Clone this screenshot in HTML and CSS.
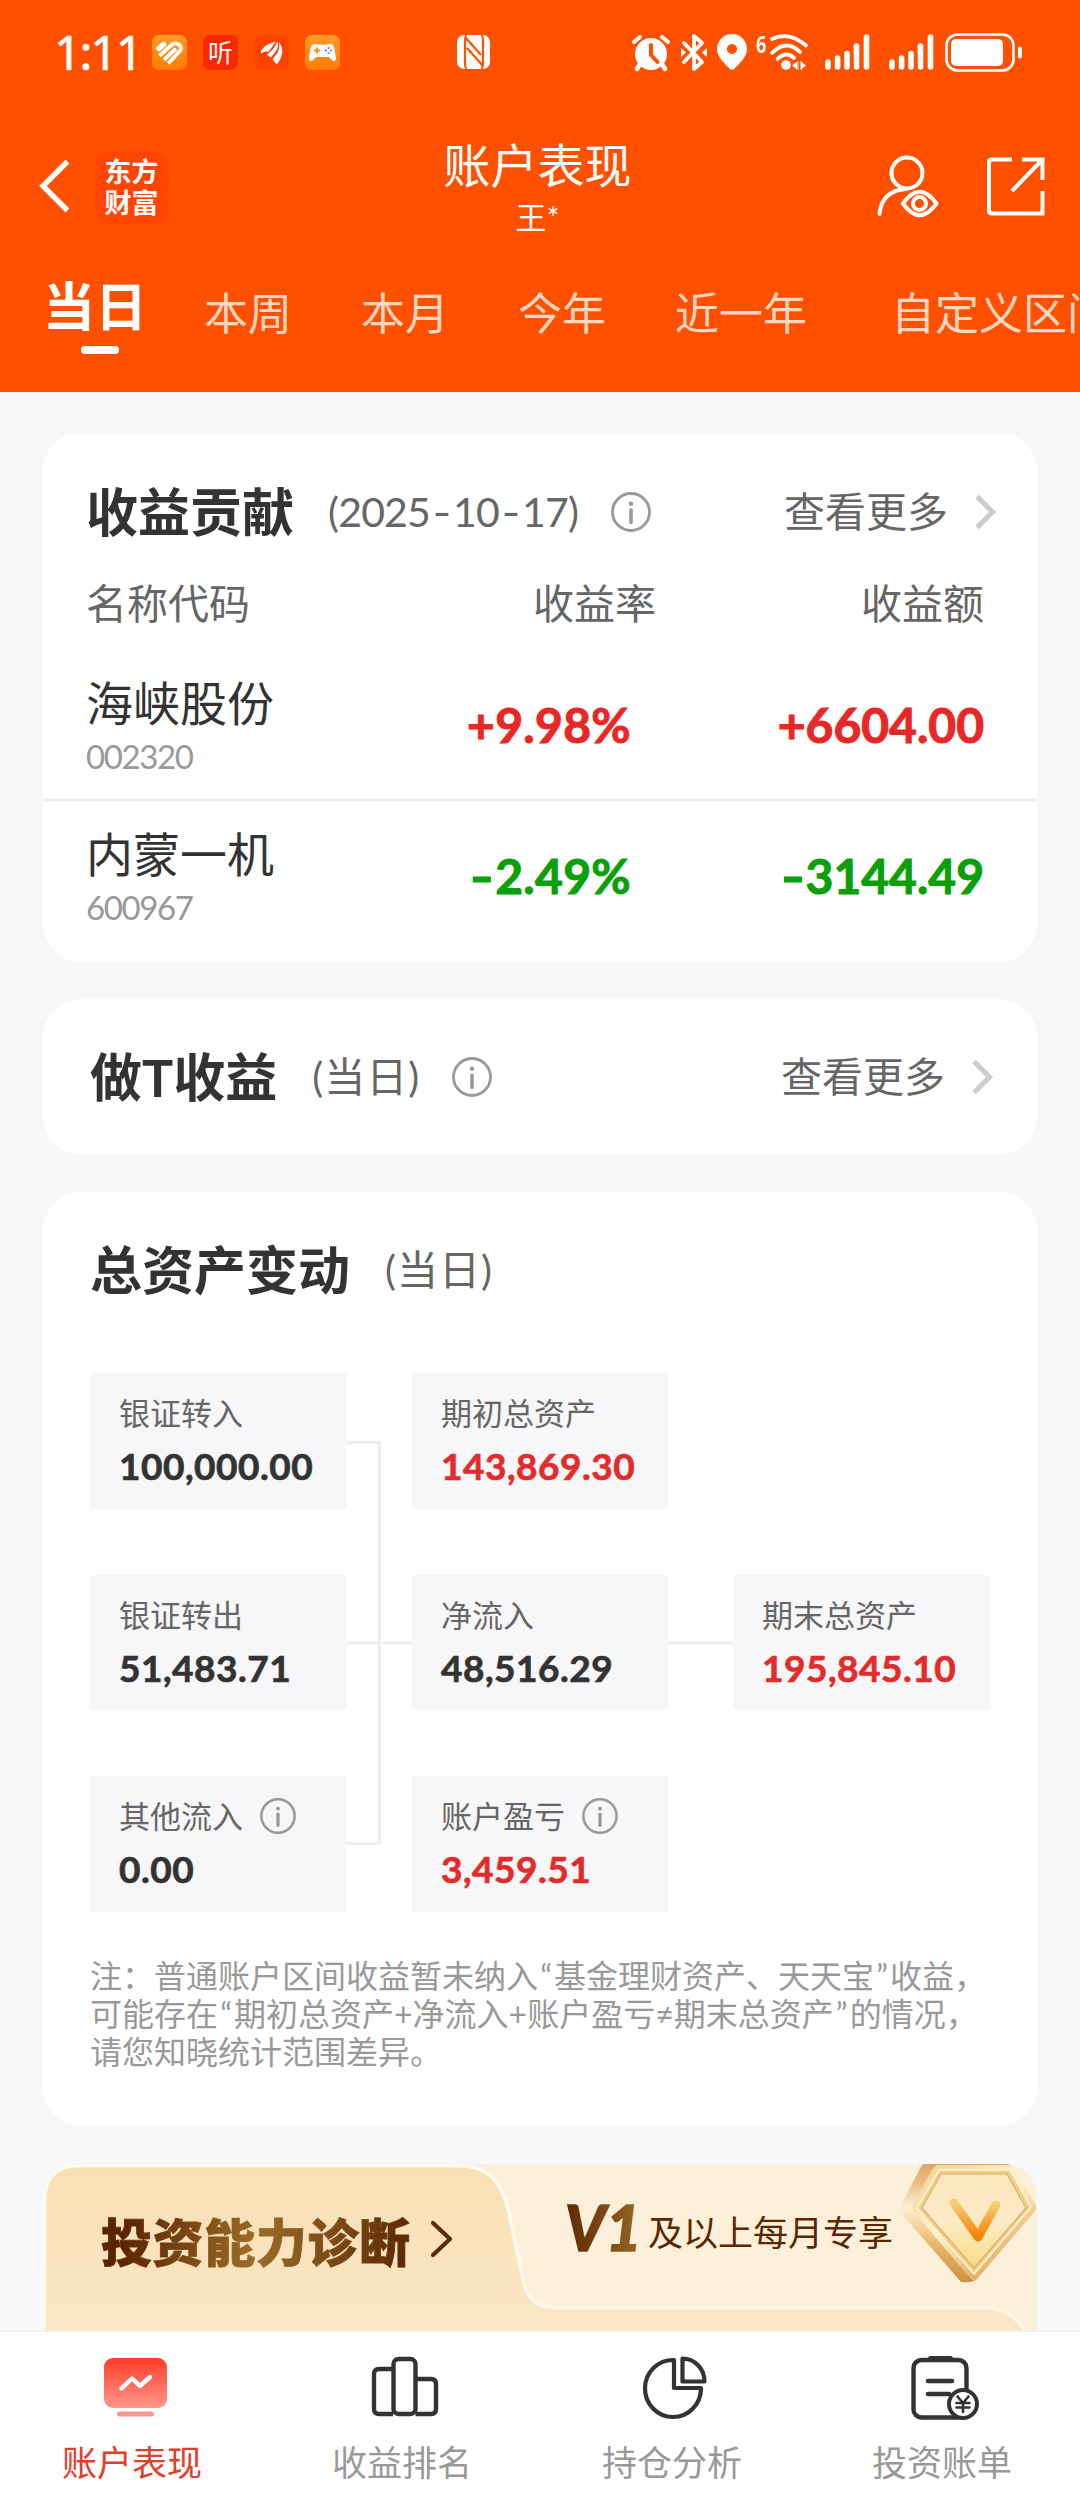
FILE: index.html
```html
<!DOCTYPE html>
<html lang="zh-CN">
<head>
<meta charset="utf-8">
<title>账户表现</title>
<link rel="stylesheet" href="styles.css">
</head>
<body>
<svg class="defs" width="0" height="0" aria-hidden="true">
  <symbol id="info" viewBox="0 0 40 40"><circle cx="20" cy="20" r="18.500" fill="none" stroke="#999" stroke-width="2.800"/><circle cx="20" cy="11.800" r="2.200" fill="#999"/><path d="M20 18v12.500" stroke="#999" stroke-width="3.600" stroke-linecap="round"/></symbol>
  <symbol id="more" viewBox="0 0 23 36"><path d="M3 2.500L18.500 18L3 33.500" fill="none" stroke="#ccc" stroke-width="5"/></symbol>
  <symbol id="bars" viewBox="0 0 46 36"><path d="M3 28v5M12.600 24v9M22 19.500v13.500M31.500 12v21M41.500 3v30" stroke="#fff" stroke-width="5.600" stroke-linecap="round"/></symbol>
</svg>
<header class="top">
  <div class="status">
    <span class="time">1:11</span>
    <div class="apps">
      <svg width="35" height="35" viewBox="0 0 35 35"><defs><linearGradient id="og" x2="0" y2="1"><stop stop-color="#ff9b28"/><stop offset="1" stop-color="#ff7d00"/></linearGradient></defs><rect width="35" height="35" rx="7" fill="url(#og)"/><path d="M7 13.500L11.500 9.500" stroke="#fff" stroke-width="5.500" stroke-linecap="round"/><path d="M9 19.500L19.500 10C24.500 5.500 32 11.500 27.500 16.500L17.500 27M13.500 23.500L22.500 15" fill="none" stroke="#fff" stroke-width="3.900" stroke-linecap="square"/></svg>
      <span class="listen">听</span>
      <svg width="35" height="35" viewBox="0 0 35 35"><rect width="35" height="35" rx="7" fill="#ff4200"/><path d="M7 16C11 9 16 9 22 6.500C19 10 18 13 14 17C11 16 9 17 7 19ZM13 20C17 16 21 13 23.500 6.500C25.500 14 21 17 17 22.500ZM18.500 24C23 19 26.500 15 25 7C31 14 28 24 22.500 29.500Z" fill="#fff"/></svg>
      <svg width="35" height="35" viewBox="0 0 35 35"><rect width="35" height="35" rx="7" fill="url(#og)"/><path d="M9 9Q17.500 10.500 26 9Q29 9 30 17Q32 26 29.500 26Q28 27 24 22H11Q7 27 5.500 26Q3 26 5 17Q6 9 9 9Z" fill="#fff"/><path d="M12 12.500v6M9 15.500h6" stroke="#ff8b12" stroke-width="2"/><circle cx="23.500" cy="13" r="1.100" fill="#d44"/><circle cx="26" cy="15.500" r="1.100" fill="#68b"/><circle cx="21" cy="15.500" r="1.100" fill="#27c"/><circle cx="23.500" cy="18" r="1.100" fill="#2aa"/></svg>
    </div>
    <svg class="nfc" width="33" height="34" viewBox="0 0 33 34"><rect width="33" height="34" rx="7" fill="#fff"/><path d="M10 0Q8 0 8 7V27Q8 34 10 34M24 0Q26 0 26 7V27Q26 34 24 34M8 2L24 20M10 13L26 31" fill="none" stroke="#ff5000" stroke-width="2.200"/></svg>
    <div class="signals">
      <svg width="38" height="37" viewBox="0 0 38 37"><path d="M2 8l6-5M36 8l-6-5" stroke="#fff" stroke-width="4" stroke-linecap="round"/><circle cx="19" cy="20" r="16" fill="#fff"/><path d="M8 30l-3 5M30 30l3 5" stroke="#fff" stroke-width="4.500" stroke-linecap="round"/><path d="M19 11v10l6.500 7" fill="none" stroke="#ff5000" stroke-width="4" stroke-linecap="round"/></svg>
      <svg class="bt" width="26" height="37" viewBox="0 0 26 37"><path d="M3 9l18 19l-8 7V2l8 7L3 28" fill="none" stroke="#fff" stroke-width="3.800" stroke-linejoin="round" stroke-linecap="round"/><path d="M0 14l5 4.500l-5 4.500zM26 14l-5 4.500l5 4.500z" fill="#fff"/></svg>
      <svg class="pin" width="30" height="36" viewBox="0 0 30 36"><path fill-rule="evenodd" d="M15 0A15 15 0 0 1 30 15C30 23 22 30 17 35Q15 37 13 35C8 30 0 23 0 15A15 15 0 0 1 15 0ZM15 10a5 5 0 1 0 .01 0z" fill="#fff"/></svg>
      <span class="six">6</span>
      <svg class="wifi" width="40" height="36" viewBox="0 0 40 36"><g fill="none" stroke="#fff" stroke-width="3.800" stroke-linecap="round"><path d="M3 5Q20 -3 37 11.500M3 19Q17.500 4.500 31 18M8.500 25Q17 16.500 25 24"/></g><circle cx="17" cy="31" r="4.800" fill="#fff"/><path d="M23 31.500l5-4v8zM37 31.500l-5-4v8z" fill="#fff"/><path d="M29 27v9M32 27v9" stroke="#fff" stroke-width="1"/></svg>
      <svg class="cell" width="46" height="36"><use href="#bars"/></svg>
      <svg class="cell two" width="46" height="36"><use href="#bars"/></svg>
      <svg class="batt" width="78" height="39" viewBox="0 0 78 39"><rect x="1.500" y="1.500" width="67" height="36" rx="11" fill="none" stroke="#fff" stroke-width="2.600"/><rect x="6" y="6" width="52" height="27" rx="5" fill="#fff"/><rect x="73" y="13.500" width="4" height="12" rx="2" fill="#fff"/></svg>
    </div>
  </div>
  <div class="nav">
    <div class="nav-side">
      <svg width="32" height="56" viewBox="0 0 32 56"><path d="M28.500 2.500L4 27L28.500 51.500" fill="none" stroke="#fff" stroke-width="5.400"/></svg>
      <div class="logo">东方<br>财富</div>
    </div>
    <div class="title"><h1>账户表现</h1><p>王*</p></div>
    <div class="nav-side end">
      <svg width="64" height="64" viewBox="0 0 64 64"><g fill="none" stroke="#fff" stroke-width="4"><circle cx="31" cy="18" r="15.500"/><path d="M30 34Q6 35.500 3.500 59" stroke-linecap="round"/><path d="M27 48.500Q43.500 25 60.500 48.500Q43.500 72 27 48.500Z" stroke-linejoin="round" stroke-width="4"/><circle cx="43.500" cy="48.500" r="6.500"/></g></svg>
      <svg class="share" width="58" height="60" viewBox="0 0 58 60"><path d="M25 2.500H5Q2 2.500 2 5.500V53.500Q2 56.500 5 56.500H55.500V34M35 2.500H55.500V23M55 3L25 34" fill="none" stroke="#fff" stroke-width="4"/></svg>
    </div>
  </div>
  <nav class="ranges">
    <a class="on">当日</a><a>本周</a><a>本月</a><a>今年</a><a>近一年</a><a class="custom">自定义区间</a>
  </nav>
</header>

<main>
  <section class="card contrib">
    <div class="head">
      <h2>收益贡献</h2><span class="sub date">(2025<i>-</i>10<i>-</i>17)</span><svg class="i" width="40" height="40"><use href="#info"/></svg>
      <a class="link">查看更多<svg width="23" height="36"><use href="#more"/></svg></a>
    </div>
    <div class="cols labels"><span>名称代码</span><span>收益率</span><span>收益额</span></div>
    <div class="cols row up"><div><p class="name">海峡股份</p><p class="code">002320</p></div><b class="pct">+9.98%</b><b>+6604.00</b></div>
    <div class="cols row down"><div><p class="name">内蒙一机</p><p class="code">600967</p></div><b class="pct"><i>-</i>2.49%</b><b><i>-</i>3144.49</b></div>
  </section>

  <section class="card tprofit">
    <div class="head">
      <h2>做T收益</h2><span class="sub day">(当日)</span><svg class="i" width="40" height="40"><use href="#info"/></svg>
      <a class="link">查看更多<svg width="23" height="36"><use href="#more"/></svg></a>
    </div>
  </section>

  <section class="card assets">
    <div class="head"><h2>总资产变动</h2><span class="sub day">(当日)</span></div>
    <div class="flow">
      <svg class="wires" width="900" height="539" viewBox="0 0 900 539"><path d="M257 69.500H289.500V470.500H257M257 270H322M578 270H643" fill="none" stroke="#eee" stroke-width="3"/></svg>
      <div class="box"><p>银证转入</p><b>100,000.00</b></div>
      <div class="box red"><p>期初总资产</p><b>143,869.30</b></div>
      <div class="box start"><p>银证转出</p><b>51,483.71</b></div>
      <div class="box"><p>净流入</p><b>48,516.29</b></div>
      <div class="box red"><p>期末总资产</p><b>195,845.10</b></div>
      <div class="box"><p>其他流入<svg width="36" height="36"><use href="#info"/></svg></p><b>0.00</b></div>
      <div class="box red"><p>账户盈亏<svg width="36" height="36"><use href="#info"/></svg></p><b>3,459.51</b></div>
    </div>
    <p class="note">注：普通账户区间收益暂未纳入<q>“</q>基金理财资产、天天宝<q>”</q>收益，<br>可能存在<q>“</q>期初总资产+净流入+账户盈亏≠期末总资产<q>”</q>的情况，<br>请您知晓统计范围差异。</p>
  </section>

  <section class="banner">
    <svg class="banner-bg" width="994" height="167" viewBox="0 0 994 167">
      <defs><linearGradient id="tab" x2="0" y2="1"><stop stop-color="#f9dfb3"/><stop offset="1" stop-color="#fbe8ca"/></linearGradient>
      <linearGradient id="edge" x2="0" y2="1"><stop stop-color="#fffdf3"/><stop offset="1" stop-color="#fff5e0"/></linearGradient></defs>
      <path d="M410 0H958Q994 0 994 38V167H400Z" fill="#fcf0da"/>
      <path d="M1.500 190V38Q1.500 1.500 36 1.500H410C440 1.500 456 10 465 45L481 120Q488 143 508 143.500H942Q970 145 984 170V190Z" fill="url(#tab)" stroke="url(#edge)" stroke-width="3.500"/>
    </svg>
    <div class="banner-row">
      <h2 class="diag">投资能力诊断</h2>
      <svg class="arrow" width="24" height="38" viewBox="0 0 24 38"><path d="M3 3L20 19L3 35" fill="none" stroke="#5d2b05" stroke-width="4.200" stroke-linecap="round" stroke-linejoin="round"/></svg>
      <span class="v1">V1</span><span class="perk">及以上每月专享</span>
      <svg class="gem" width="138" height="120" viewBox="0 0 138 120">
        <defs>
          <linearGradient id="side" x2="0" y2="1"><stop stop-color="#e0a468"/><stop offset=".18" stop-color="#ecc08c"/><stop offset=".36" stop-color="#fff0d4"/><stop offset=".7" stop-color="#e8b467"/><stop offset="1" stop-color="#ce9142"/></linearGradient>
          <linearGradient id="rim" x2=".7" y2="1"><stop stop-color="#f3cf8b"/><stop offset=".5" stop-color="#fff3d0"/><stop offset="1" stop-color="#dda348"/></linearGradient>
          <linearGradient id="face" x2="0" y2="1"><stop stop-color="#fbe5bd"/><stop offset=".5" stop-color="#fdecc8"/><stop offset="1" stop-color="#f8dc80"/></linearGradient>
          <linearGradient id="vee" x2="0" y2="1"><stop stop-color="#f5ce78"/><stop offset="1" stop-color="#f68200"/></linearGradient>
        </defs>
        <path d="M24 0H110L136 45L76 116Q74 119 62 118L2 49Q-1 45 2 41L22 3Z" fill="url(#side)"/>
        <path d="M38 1H112Q115 2 116 5L136 40Q138 44 136 47L78 115Q75 118 72 115L15 48Q12 44 14 40L34 4Z" fill="url(#rim)"/>
        <path d="M40 6H111L132 43L75 110L18 44Z" fill="#f0cf8b" stroke="#fff5d9" stroke-width="1.600"/>
        <path d="M42 10H108L127 44L75 104L23 44Z" fill="url(#face)" stroke="#dcb063" stroke-width="1.200"/>
        <path d="M55 39L79 73L97 41" fill="none" stroke="url(#vee)" stroke-width="9" stroke-linecap="round" stroke-linejoin="round"/>
      </svg>
    </div>
  </section>
</main>

<footer class="tabs">
  <a class="on"><svg width="68" height="70" viewBox="0 0 68 70"><defs><linearGradient id="rd" x2="0" y2="1"><stop stop-color="#ff3d28"/><stop offset="1" stop-color="#ff968a"/></linearGradient></defs><rect x="3" y="4" width="63" height="50" rx="9" fill="url(#rd)"/><rect x="16" y="57.500" width="37" height="5" rx="2.500" fill="#f79a90"/><path d="M20.500 34.500L31 24.500L39 32L49 23" fill="none" stroke="#fff" stroke-width="4.400" stroke-linecap="round" stroke-linejoin="round"/></svg><span>账户表现</span></a>
  <a><svg width="68" height="70" viewBox="0 0 68 70"><g fill="none" stroke="#333" stroke-width="4.400"><path d="M22 60H8Q3 60 3 55V20Q3 15 8 15H22"/><rect x="22.500" y="5" width="22" height="55" rx="5"/><path d="M44.500 25H60Q65 25 65 30V55Q65 60 60 60H44.500"/></g></svg><span>收益排名</span></a>
  <a><svg width="68" height="70" viewBox="0 0 68 70"><g fill="none" stroke="#333" stroke-width="4.200" stroke-linejoin="round"><path d="M33 6V34H60A28 28.500 0 1 1 33 6Z"/><path d="M41.500 4.500V27.500H63.500A22 23 0 0 0 41.500 4.500Z"/></g></svg><span>持仓分析</span></a>
  <a><svg width="68" height="70" viewBox="0 0 68 70"><rect x="2.500" y="6" width="53" height="57.500" rx="8" fill="none" stroke="#333" stroke-width="4.400"/><path d="M19.500 4.500H39.500" stroke="#333" stroke-width="5" stroke-linecap="round"/><path d="M17 27H41M17 40H38" stroke="#333" stroke-width="4.600" stroke-linecap="round"/><circle cx="52" cy="50" r="14" fill="#fff" stroke="#333" stroke-width="4"/><path d="M46.500 42.500L52 49L57.500 42.500M52 49V58M45.500 49H58.500M45.500 53.500H58.500" fill="none" stroke="#333" stroke-width="2.600" stroke-linecap="round"/></svg><span>投资账单</span></a>
</footer>
</body>
</html>
```
FILE: styles.css
```css
* { box-sizing: border-box; }
body {
  margin: 0;
  width: 1080px;
  height: 2504px;
  display: flex;
  flex-direction: column;
  overflow: hidden;
  background: #f7f8fa;
  color: #333;
  font-family: Lato, "Noto Sans CJK SC", sans-serif;
}
h1, h2, p { margin: 0; font-weight: normal; }
svg { display: block; flex: none; overflow: visible; }
.defs { position: absolute; }

/* header */
.top { height: 392px; flex: none; background: #ff5000; color: #fff; overflow: hidden; }
.status { height: 104px; display: flex; align-items: center; padding-left: 54px; }
.time { width: 98px; font: 48px/60px "Noto Sans", sans-serif; letter-spacing: -2px; -webkit-text-stroke: .6px #fff; }
.apps { display: flex; gap: 16px; }
.listen { width: 35px; height: 35px; border-radius: 7px; background: #fa2800; font: 25px/33px "Noto Sans CJK SC", sans-serif; text-align: center; }
.nfc { margin-left: 117px; }
.signals { display: flex; align-items: center; margin-left: 142px; }
.bt { margin-left: 11px; }
.pin { margin-left: 10px; }
.six { width: 11px; height: 40px; margin-left: 9px; font: bold 24px/24px "Noto Sans", sans-serif; transform: scaleX(.75); transform-origin: left; }
.wifi { margin-left: 2px; }
.cell { margin-left: 16px; }
.two { margin-left: 18px; }
.batt { margin-left: 10px; }

.nav { height: 166px; display: flex; justify-content: space-between; }
.nav-side { width: 210px; display: flex; align-items: center; padding: 0 0 0 39px; }
.logo { width: 73px; height: 73px; margin-left: 24px; border-radius: 15px; background: #ff4500; font-size: 27px; font-weight: bold; line-height: 31px; text-align: center; padding-top: 5px; }
.nav-side.end { padding: 0; }
.nav-side.end svg:first-child { margin-left: 6px; }
.nav-side .share { margin-left: 47px; }
.title { text-align: center; padding: 31px 5px 0 0; }
.title h1 { font-size: 47px; line-height: 60px; }
.title p { font-size: 31px; line-height: 40px; margin-top: 2px; }

.ranges { display: flex; padding-left: 43px; white-space: nowrap; }
.ranges a { font-size: 44px; line-height: 60px; margin: 13px 69px 0 0; color: #ffd6c2; flex: none; }
.ranges .on { font-size: 52px; font-weight: bold; color: #fff; margin: 6px 57px 0 0; display: flex; flex-direction: column; align-items: center; }
.ranges .on::after { content: ""; width: 38px; height: 8px; border-radius: 4px; background: #fff; margin: 10px 0 0 10px; }
.ranges .custom { margin-left: 15px; }

/* cards */
main { flex: 1; min-height: 0; overflow: hidden; padding: 41px 43px 0; display: flex; flex-direction: column; gap: 37px; }
.card { flex: none; background: #fff; border-radius: 38px; }
.head { height: 156px; display: flex; align-items: center; padding: 0 43px 0 47px; }
.head h2 { font-size: 52px; font-weight: bold; line-height: 60px; }
.sub { font-size: 41px; line-height: 52px; color: #666; margin-left: 35px; }
.day { width: 110px; letter-spacing: 1px; }
.i { margin-left: 30px; }
.link { margin-left: auto; display: flex; align-items: center; font-size: 41px; line-height: 52px; color: #666; }
.link svg { margin-left: 26px; }

.contrib { height: 529px; }
.contrib .head { height: 145px; padding: 13px 40px 0 43px; }
.date { width: 253px; letter-spacing: -.8px; margin-left: 34px; white-space: nowrap; }
.date i { display: inline-block; width: 23px; text-align: center; font-style: normal; transform: scaleX(1.25); }
.cols { display: grid; grid-template-columns: 1fr 240px 328px; align-items: center; padding: 0 53px 0 43px; }
.cols > :not(:first-child) { text-align: right; }
.labels { height: 52px; font-size: 41px; line-height: 52px; color: #666; }
.row { padding-top: 43px; padding-bottom: 20px; }
.row + .row { border-top: 2px solid #eee; padding-top: 23px; }
.name { font-size: 47px; line-height: 60px; }
.code { font-size: 33px; line-height: 46px; color: #999; letter-spacing: -1.400px; }
.row b { font-size: 48px; line-height: 60px; margin-top: -2px; -webkit-text-stroke: 1px currentColor; }
.row b i { display: inline-block; width: 26px; text-align: center; font-style: normal; transform: scaleX(1.35); }
.row .pct { padding-right: 25px; letter-spacing: .3px; }
.up b { color: #e92727; }
.down b { color: #09a009; }

.assets { height: 934px; }
.flow { position: relative; margin: 25px 47px 0; display: grid; grid-template-columns: 257px 256px 257px; grid-template-rows: repeat(3, 135.5px); gap: 66px 65px; }
.wires { position: absolute; left: 0; top: 0; }
.start { grid-column-start: 1; }
.box { background: #f7f7f9; padding: 20px 0 0 29px; }
.box p { display: flex; align-items: center; font-size: 31px; line-height: 40px; color: #666; }
.box p svg { margin-left: 17px; }
.box b { display: block; margin-top: 9px; font-size: 37px; line-height: 48px; letter-spacing: .5px; -webkit-text-stroke: .7px currentColor; }
.red b { color: #e42b2b; }
.note { margin: 45px 0 0 47px; font-size: 32px; line-height: 38.300px; color: #999; white-space: nowrap; }
.note q { quotes: none; display: inline-block; width: 16px; text-align: center; }

/* promotion */
.banner { position: relative; flex: none; height: 167px; margin-top: 1px; }
.banner-bg { position: absolute; left: 0; top: 0; }
.banner-row { position: relative; display: flex; align-items: flex-start; height: 167px; }
.diag { margin: 44px 0 0 58px; width: 310px; flex: none; font-size: 51px; font-weight: 900; line-height: 70px; letter-spacing: .6px; white-space: nowrap; background: linear-gradient(100deg, #5a2400 8%, #9c6c28 50%, #5e2b05 96%); -webkit-background-clip: text; background-clip: text; color: transparent; -webkit-text-stroke: .8px transparent; }
.arrow { margin: 56px 0 0 19px; }
.v1 { flex: none; margin: 23px 0 0 108px; width: 86px; padding-left: 3px; font: italic 900 62px/80px Lato, sans-serif; background: linear-gradient(90deg, #5e2600, #9c6c28); -webkit-background-clip: text; background-clip: text; color: transparent; -webkit-text-stroke: 1.5px transparent; }
.perk { flex: none; margin-top: 43px; width: 246px; font-size: 35px; line-height: 50px; color: #5a2700; white-space: nowrap; }
.gem { margin: 0 0 0 5px; }

/* bottom tabs */
.tabs { flex: none; height: 173px; background: #fff; border-top: 1px solid #eee; display: flex; }
.tabs a { width: 270px; display: flex; flex-direction: column; align-items: center; padding-top: 22px; font-size: 35px; color: #999; }
.tabs span { margin: 13px 6px 0 0; line-height: 50px; }
.tabs .on { color: #e23e2b; }
```
